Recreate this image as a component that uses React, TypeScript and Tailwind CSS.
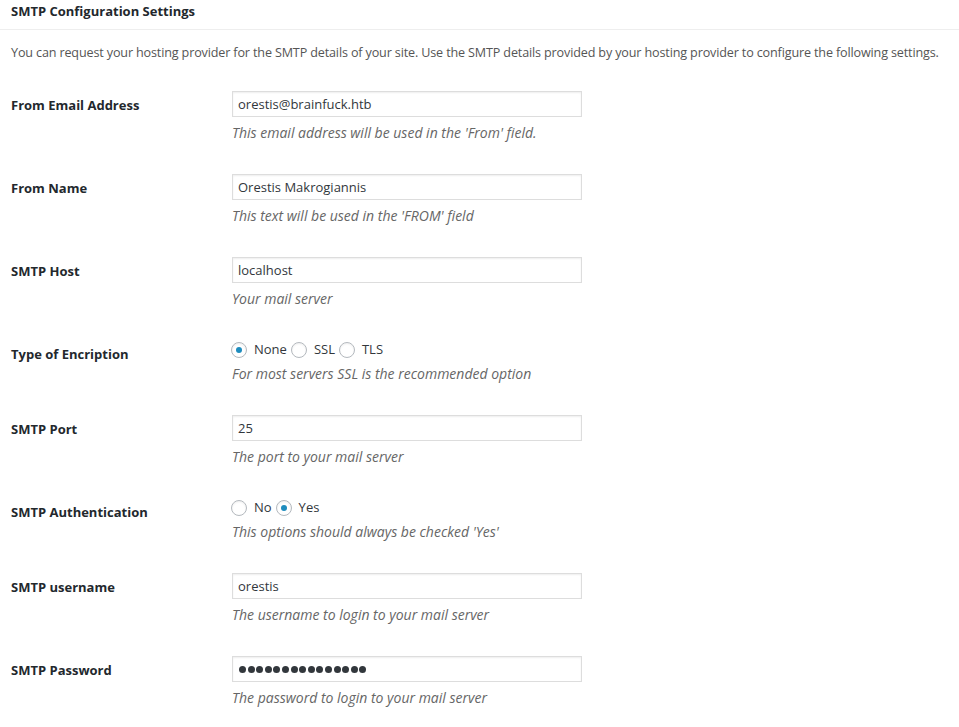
import React from "react";

type Field =
  | { kind: "input"; label: string; value: string; help: string; secret?: boolean }
  | { kind: "radio"; label: string; options: string[]; checked: string; help: string };

const fields: Field[] = [
  { kind: "input", label: "From Email Address", value: "orestis@brainfuck.htb", help: "This email address will be used in the 'From' field." },
  { kind: "input", label: "From Name", value: "Orestis Makrogiannis", help: "This text will be used in the 'FROM' field" },
  { kind: "input", label: "SMTP Host", value: "localhost", help: "Your mail server" },
  { kind: "radio", label: "Type of Encription", options: ["None", "SSL", "TLS"], checked: "None", help: "For most servers SSL is the recommended option" },
  { kind: "input", label: "SMTP Port", value: "25", help: "The port to your mail server" },
  { kind: "radio", label: "SMTP Authentication", options: ["No", "Yes"], checked: "Yes", help: "This options should always be checked 'Yes'" },
  { kind: "input", label: "SMTP username", value: "orestis", help: "The username to login to your mail server" },
  { kind: "input", label: "SMTP Password", value: "", help: "The password to login to your mail server", secret: true },
];

function Radio({ on }: { on: boolean }) {
  return (
    <span className="w-4 h-4 rounded-full border border-[#b4b9be] bg-white shadow-[inset_0_1px_2px_rgba(0,0,0,0.07)] flex items-center justify-center shrink-0">
      {on && <span className="w-[6px] h-[6px] rounded-full bg-[#1e8cbe]" />}
    </span>
  );
}

export default function App() {
  return (
    <div className="bg-white min-h-screen text-[13px] text-[#444] font-['Open_Sans','Noto_Sans',sans-serif]">
      {/* Header */}
      <div className="h-[30px] border-b border-[#eee] pl-[11px] pt-[2px]">
        <h3 className="font-bold text-[#23282d] leading-[18px]">SMTP Configuration Settings</h3>
      </div>

      <p className="pl-[11px] mt-[14px] leading-[18px] text-[12.6px] text-[#555] whitespace-nowrap tracking-[-0.15px]">
        You can request your hosting provider for the SMTP details of your site. Use the SMTP details provided by your hosting provider to configure the following settings.
      </p>

      <div className="mt-[14px] flex flex-col">
        {fields.map((f) => (
          <div key={f.label} className="flex">
            <div className="w-[232px] pl-[11px] pt-[20px] font-bold text-[#23282d] leading-[19px]">{f.label}</div>
            <div className="pt-[15px] pb-[17px]">
              {f.kind === "input" ? (
                f.secret ? (
                  <div className="flex items-center gap-[1.6px] w-[350px] h-[26px] border border-[#ddd] shadow-[inset_0_1px_2px_rgba(0,0,0,0.07)] px-[6px]">
                    {Array.from({ length: 15 }).map((_, i) => (
                      <span key={i} className="w-[7px] h-[7px] rounded-full bg-[#32373c]" />
                    ))}
                  </div>
                ) : (
                  <input
                    type="text"
                    defaultValue={f.value}
                    readOnly
                    className="block w-[350px] h-[26px] border border-[#ddd] shadow-[inset_0_1px_2px_rgba(0,0,0,0.07)] px-[5px] text-[13px] text-[#32373c] outline-none"
                  />
                )
              ) : (
                <div className="flex items-center h-5 -ml-px text-[#32373c]">
                  {f.options.map((o) => (
                    <label key={o} className="flex items-center mr-[4px]">
                      <Radio on={o === f.checked} />
                      <span className="ml-[7px]">{o}</span>
                    </label>
                  ))}
                </div>
              )}
              <p className={`italic text-[14px] text-[#666] leading-[18px] ${f.kind === "input" ? "mt-[7px]" : "mt-[5px]"}`}>{f.help}</p>
            </div>
          </div>
        ))}
      </div>
    </div>
  );
}
